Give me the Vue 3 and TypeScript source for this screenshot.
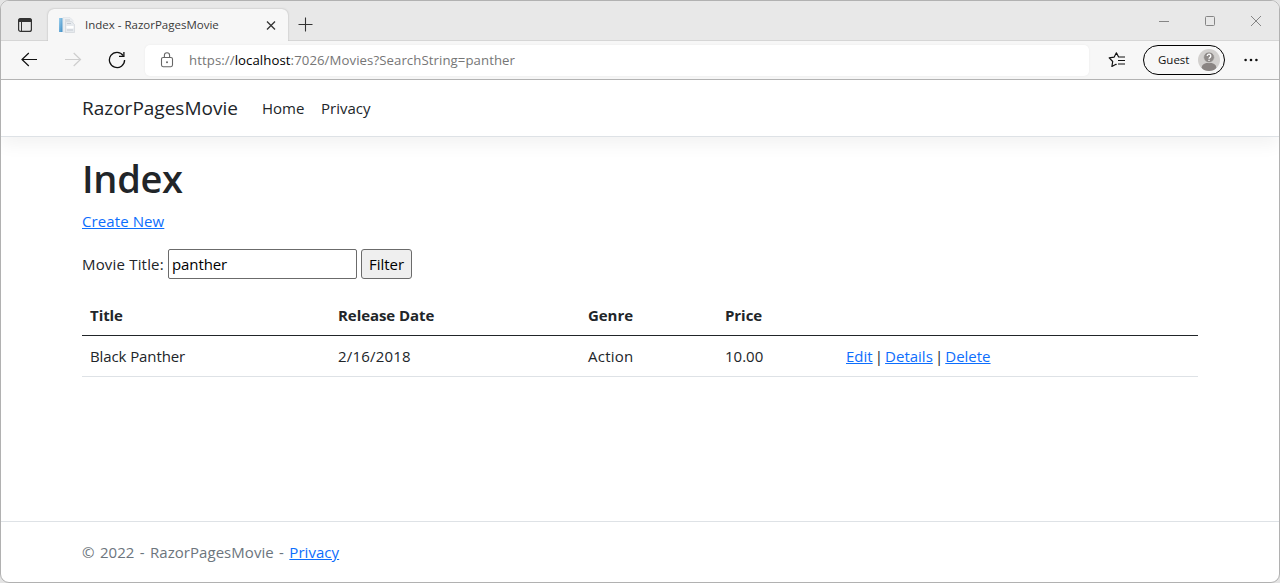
<script setup lang="ts">
import { ref } from 'vue'

interface Movie {
  title: string
  releaseDate: string
  genre: string
  price: string
}

const search = ref<string>('panther')
const movies: Movie[] = [
  { title: 'Black Panther', releaseDate: '2/16/2018', genre: 'Action', price: '10.00' },
]
</script>

<template>
  <div class="window">
    <div class="titlebar">
      <svg class="tab-menu" width="16" height="16" viewBox="0 0 16 16">
        <rect x="1.6" y="1.6" width="12.8" height="12.8" rx="2" fill="none" stroke="#333" stroke-width="1.2" />
        <path d="M1.2 5V3.5a2.2 2.2 0 0 1 2.2-2.2h9.2a2.2 2.2 0 0 1 2.2 2.2V5z" fill="#333" />
        <path d="M4.5 5v9.5" stroke="#333" />
      </svg>
      <div class="tab">
        <svg class="favicon" width="16" height="16" viewBox="0 0 16 16">
          <defs>
            <linearGradient id="spine" x1="0" y1="0" x2="1" y2="1">
              <stop offset="0" stop-color="#9dd0ee" />
              <stop offset="1" stop-color="#3d8cc4" />
            </linearGradient>
          </defs>
          <path d="M4 .5h7l3 3V15H4z" fill="#eceff2" stroke="#dde1e5" stroke-width=".6" />
          <rect x="0" y="1" width="3.5" height="14" fill="url(#spine)" />
          <path d="M6.5 4.5h6l3 3v8h-9z" fill="#e6eaee" stroke="#cdd2d7" stroke-width=".6" />
          <path d="M6 3h5M8 6.5h4M8 13h6" stroke="#bcc3ca" stroke-width=".8" />
          <path d="M7.5 9h7v2.5h-7z" fill="#fff" />
        </svg>
        <span class="tab-title">Index - RazorPagesMovie</span>
        <svg class="tab-close" width="10" height="10" viewBox="0 0 10 10">
          <path d="M1 1.5l8 8M9 1.5L1 9.5" stroke="#333" stroke-width="1.3" />
        </svg>
      </div>
      <svg class="new-tab" width="16" height="16" viewBox="0 0 16 16">
        <path d="M.5 8.5h14M7.5 1.5v14" stroke="#333" stroke-width="1.1" />
      </svg>
      <div class="controls">
        <svg width="12" height="12" viewBox="0 0 12 12"><path d="M1 7.5h10" stroke="#858585" /></svg>
        <svg width="12" height="12" viewBox="0 0 12 12"><rect x="1.5" y="2.5" width="9" height="9" rx="1" fill="none" stroke="#858585" /></svg>
        <svg width="12" height="12" viewBox="0 0 12 12"><path d="M1 2l10 10M11 2L1 12" stroke="#858585" /></svg>
      </div>
    </div>

    <div class="toolbar">
      <svg class="back" width="18" height="16" viewBox="0 0 18 16">
        <path d="M8.8 1L2 7.5l6.8 6.5M2 7.5h15" fill="none" stroke="#111" stroke-width="1.2" />
      </svg>
      <svg class="forward" width="18" height="16" viewBox="0 0 18 16">
        <path d="M9.7 1l6.8 6.5L9.7 14M16.5 7.5H1" fill="none" stroke="#cecece" stroke-width="1.2" />
      </svg>
      <svg class="reload" width="18" height="18" viewBox="0 0 18 18">
        <path d="M15.2 4.6A7.6 7.6 0 1 0 16.6 9" fill="none" stroke="#111" stroke-width="1.3" />
        <path d="M15.9 1v4.4H11" fill="none" stroke="#111" stroke-width="1.3" />
      </svg>
      <div class="address">
        <svg width="14" height="16" viewBox="0 0 14 16">
          <rect x="1.5" y="5.5" width="11" height="9.2" rx="1.6" fill="none" stroke="#666" stroke-width="1.1" />
          <path d="M4.4 5.5V3.3a2.6 2.6 0 0 1 5.2 0v2.2" fill="none" stroke="#666" stroke-width="1.1" />
          <circle cx="7" cy="10.2" r="1" fill="#666" />
        </svg>
        <span class="url">https://<b>localhost</b>:7026/Movies?SearchString=panther</span>
      </div>
      <svg class="favorites" width="18" height="18" viewBox="0 0 18 18">
        <path d="M10.6 6L8.4 1.8 6.2 6.1 1.2 6.9l3.5 3.6-.8 5L8 13.3l.6.3" fill="none" stroke="#111" stroke-width="1.2" stroke-linejoin="round" />
        <path d="M10.2 6H17M10 9.5h7M10 13h7" stroke="#111" stroke-width="1.2" />
      </svg>
      <div class="profile">
        <span>Guest</span>
        <svg width="22" height="22" viewBox="0 0 22 22">
          <defs><clipPath id="disc"><circle cx="11" cy="11" r="11" /></clipPath></defs>
          <circle cx="11" cy="11" r="11" fill="#d2d0ce" />
          <ellipse cx="11" cy="18.3" rx="7.3" ry="4.6" fill="#8a8583" clip-path="url(#disc)" />
          <circle cx="11" cy="8.3" r="5.4" fill="#8f8b89" stroke="#d2d0ce" stroke-width=".8" />
          <path d="M9.2 7a1.8 1.8 0 1 1 2.9 1.4c-.7.4-1.1.7-1.1 1.4M11 10.8v1.3" fill="none" stroke="#fff" stroke-width="1.3" />
        </svg>
      </div>
      <svg class="more" width="16" height="4" viewBox="0 0 16 4">
        <circle cx="2.6" cy="2" r="1.3" fill="#111" />
        <circle cx="8" cy="2" r="1.3" fill="#111" />
        <circle cx="13.4" cy="2" r="1.3" fill="#111" />
      </svg>
    </div>

    <div class="page">
      <header class="navbar">
        <a class="brand">RazorPagesMovie</a>
        <a class="nav-link home">Home</a>
        <a class="nav-link">Privacy</a>
      </header>

      <main>
        <h1>Index</h1>
        <p class="create"><a class="link">Create New</a></p>
        <form class="filter" @submit.prevent>
          <label for="search">Movie Title:</label>
          <input id="search" v-model="search" type="text" />
          <button type="submit">Filter</button>
        </form>
        <table>
          <colgroup>
            <col class="c-title" /><col class="c-date" /><col class="c-genre" /><col class="c-price" /><col />
          </colgroup>
          <thead>
            <tr><th>Title</th><th>Release Date</th><th>Genre</th><th>Price</th><th></th></tr>
          </thead>
          <tbody>
            <tr v-for="movie in movies" :key="movie.title">
              <td class="title">{{ movie.title }}</td>
              <td class="date">{{ movie.releaseDate }}</td>
              <td class="genre">{{ movie.genre }}</td>
              <td>{{ movie.price }}</td>
              <td class="actions"><a class="link">Edit</a> | <a class="link">Details</a> | <a class="link">Delete</a></td>
            </tr>
          </tbody>
        </table>
      </main>

      <footer>© 2022 - RazorPagesMovie - <a class="link">Privacy</a></footer>
    </div>
  </div>
</template>

<style>
body {
  margin: 0;
  background: #e4e4e4;
}
</style>

<style scoped>
* {
  box-sizing: border-box;
}
.window {
  display: flex;
  flex-direction: column;
  width: 1280px;
  height: 583px;
  overflow: hidden;
  border: 1px solid #b1b1b1;
  border-radius: 9px;
  background: #fff;
  color: #212529;
  font-family: "Open Sans", "Noto Sans", sans-serif;
  font-size: 15px;
  line-height: 24px;
}
svg {
  display: block;
  flex: none;
}
.titlebar {
  display: flex;
  height: 40px;
  flex: none;
  background: #e8e8e8;
  box-shadow: inset 0 -1px #d6d6d6;
}
.tab-menu {
  margin: 16px 0 0 16px;
}
.tab {
  display: flex;
  align-items: center;
  width: 240px;
  height: 32px;
  margin: 8px 0 0 15px;
  padding: 0 12px 0 11px;
  border-radius: 6px 6px 0 0;
  background: #f7f7f7;
  box-shadow: 0 0 2px #aaa;
  clip-path: inset(-3px -3px 0 -3px);
}
.tab-title {
  flex: 1;
  margin-left: 10px;
  color: #3a3a3a;
  font-size: 11.5px;
  white-space: nowrap;
}
.new-tab {
  margin: 15px 0 0 10px;
}
.controls {
  display: flex;
  gap: 34px;
  margin: 13px 17px 0 auto;
}
.toolbar {
  display: flex;
  align-items: center;
  height: 39px;
  flex: none;
  border-bottom: 1px solid #b5b5b5;
  background: #f7f7f7;
}
.back {
  margin-left: 19px;
}
.forward {
  margin-left: 26px;
}
.reload {
  margin-left: 26px;
}
.address {
  display: flex;
  align-items: center;
  width: 944px;
  height: 31px;
  margin-left: 19px;
  padding-left: 15px;
  border-radius: 5px;
  background: #fff;
  box-shadow: 0 0 2px #e8e8e8;
}
.url {
  margin-left: 15px;
  color: #767676;
  font-size: 13.2px;
  letter-spacing: 0.08px;
  white-space: nowrap;
}
.url b {
  color: #000;
  font-weight: 400;
}
.favorites {
  margin-left: 19px;
}
.profile {
  display: flex;
  align-items: center;
  justify-content: space-between;
  width: 82px;
  height: 30px;
  margin-left: 17px;
  padding: 0 4px 0 14px;
  border: 1px solid #000;
  border-radius: 15px;
  color: #111;
  font-size: 11.5px;
}
.more {
  margin-left: 18px;
}
.page {
  display: flex;
  flex: 1;
  flex-direction: column;
}
.navbar {
  display: flex;
  align-items: center;
  height: 57px;
  flex: none;
  padding-left: 81px;
  border-bottom: 1px solid #dee2e6;
  box-shadow: 0 8px 16px rgba(0, 0, 0, 0.05);
}
.brand {
  width: 180px;
  font-size: 19px;
}
.home {
  width: 59px;
}
main {
  flex: 1;
  padding: 17px 81px 0;
}
h1 {
  margin: 0 0 7px;
  font-size: 38px;
  font-weight: 600;
  letter-spacing: -0.3px;
  line-height: 48px;
}
.create {
  margin: 0 0 16px;
  letter-spacing: 0.1px;
}
.link {
  color: #0d6efd;
  text-decoration: underline;
}
.filter {
  display: flex;
  align-items: center;
  height: 30px;
  margin-bottom: 16px;
}
label {
  width: 86px;
  letter-spacing: 0.18px;
  white-space: nowrap;
}
input {
  width: 189px;
  height: 30px;
  padding: 1px 3px;
  border: 1px solid #6b6b6b;
  border-radius: 2px;
  background: #fff;
  color: #000;
  font: inherit;
  letter-spacing: -0.1px;
  outline: none;
}
button {
  width: 51px;
  height: 30px;
  margin-left: 4px;
  padding: 0;
  border: 1px solid #6b6b6b;
  border-radius: 3px;
  background: #efefef;
  color: #000;
  font: inherit;
}
table {
  width: 1116px;
  border-collapse: collapse;
  table-layout: fixed;
}
.c-title {
  width: 248px;
}
.c-date {
  width: 250px;
}
.c-genre {
  width: 137px;
}
.c-price {
  width: 121px;
}
th,
td {
  padding: 8px;
  border-bottom: 1px solid #dee2e6;
  text-align: left;
  white-space: nowrap;
}
th {
  border-bottom-color: #212529;
  font-weight: 700;
  letter-spacing: -0.06px;
}
.title {
  letter-spacing: -0.1px;
}
.date {
  letter-spacing: 0.2px;
}
.genre {
  letter-spacing: 0.25px;
}
.actions {
  word-spacing: -1.8px;
}
footer {
  height: 61px;
  padding: 18px 0 0 81px;
  border-top: 1px solid #dee2e6;
  color: #6c757d;
  letter-spacing: 0.05px;
  word-spacing: 1.4px;
}
</style>
